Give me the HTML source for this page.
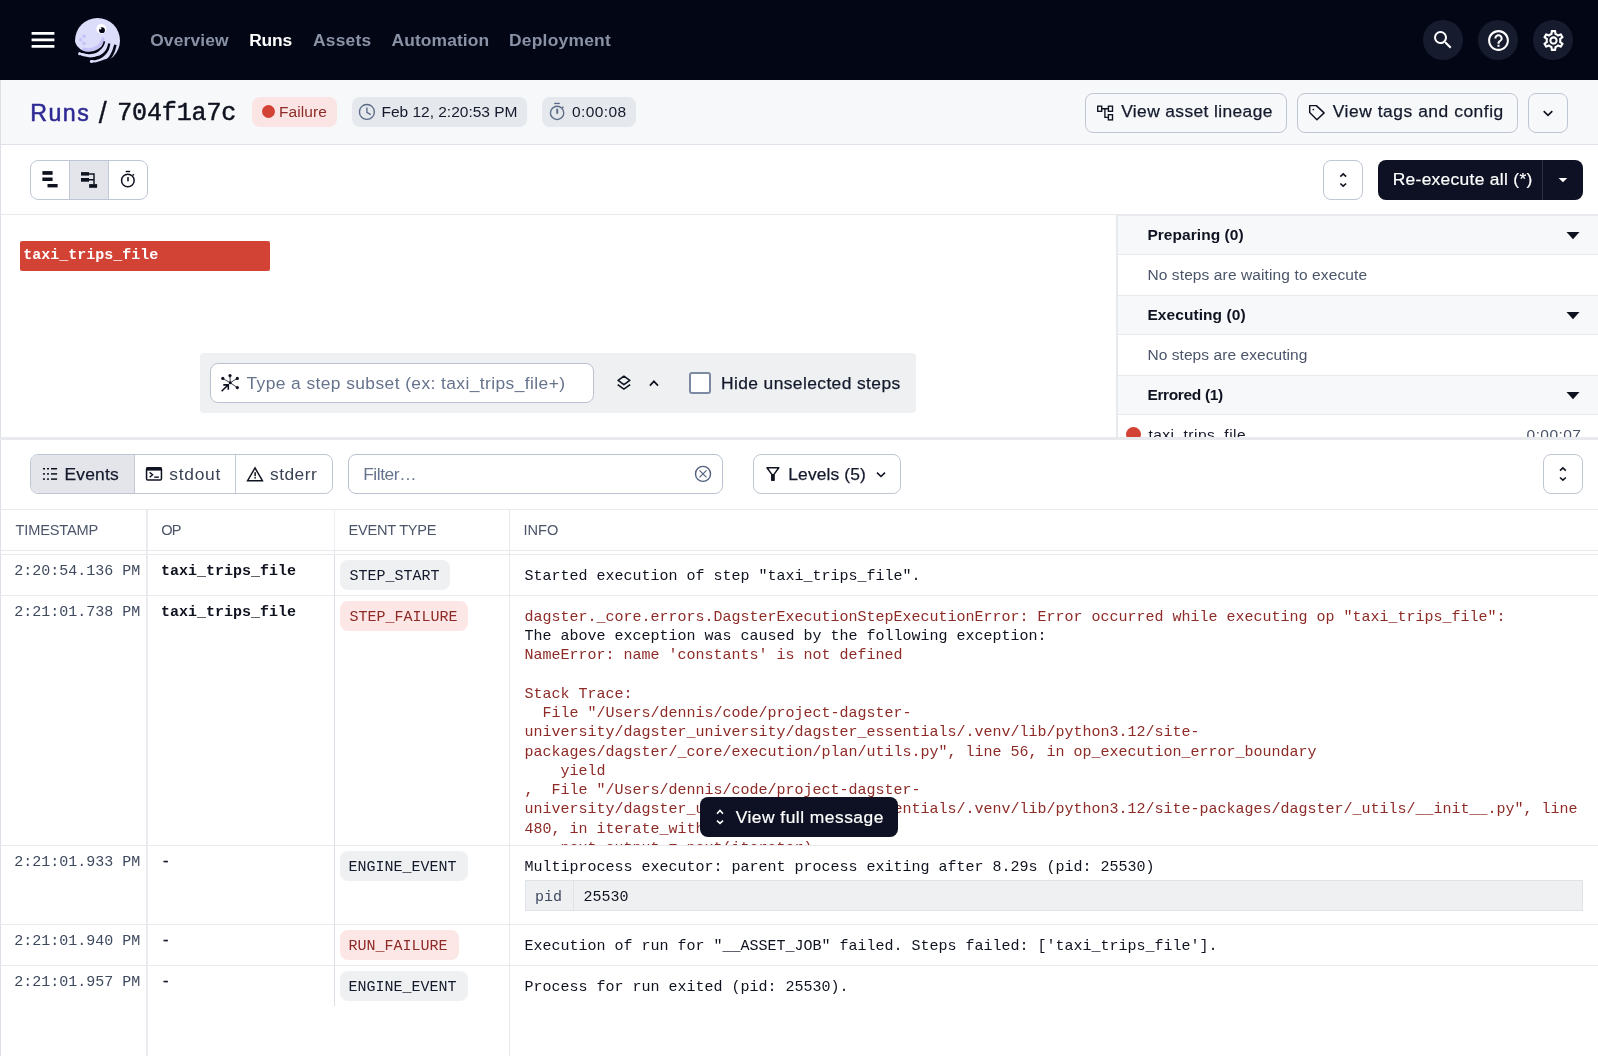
<!DOCTYPE html>
<html lang="en">
<head>
<meta charset="utf-8">
<title>Run 704f1a7c</title>
<style>
html,body{margin:0;padding:0;}
body{position:relative;width:1598px;height:1056px;overflow:hidden;background:#fff;font-family:"Liberation Sans",sans-serif;color:#0f1320;}
div,svg,.t{position:absolute;box-sizing:border-box;}
.t{white-space:pre;font-family:"Liberation Sans",sans-serif;}
.m{font-family:"Liberation Mono",monospace;}
.btn{border:1px solid #bec6d3;border-radius:8px;}
.ln{background:#e4e7ec;}
pre{margin:0;}
#app{left:0;top:0;width:1598px;height:1056px;overflow:hidden;will-change:transform;}

</style>
</head>
<body>
<div id="app">
<nav>
<div style="left:0px;top:0px;width:1598px;height:80px;background:#030615;"></div>
<svg style="left:31px;top:31px" width="24" height="18" viewBox="0 0 24 18" ><path d="M0.6 2.4h22.8M0.6 8.95h22.8M0.6 15.4h22.8" stroke="#fff" stroke-width="2.7" fill="none"/></svg>
<svg style="left:0;top:0" width="1598" height="1056" viewBox="0 0 1598 1056">
<circle cx="97.5" cy="40.5" r="22.5" fill="#dcdcfb"/>
<path d="M103.00 39.00C102.53 39.93 101.50 43.07 100.20 44.60C98.90 46.13 97.07 47.32 95.20 48.20C93.33 49.08 90.90 49.73 89.00 49.90C87.10 50.07 84.67 49.32 83.80 49.20" fill="none" stroke="#c6c2f6" stroke-width="3.2" stroke-linecap="round"/>
<path d="M103.70 41.10C103.37 41.90 102.97 44.40 101.70 45.90C100.43 47.40 98.18 49.13 96.10 50.10C94.02 51.07 91.45 51.65 89.20 51.70C86.95 51.75 84.50 51.22 82.60 50.40C80.70 49.58 79.03 48.12 77.80 46.80C76.57 45.48 75.63 43.22 75.20 42.50L70.00 45.00C70.75 46.53 73.75 52.67 74.50 54.20L78.90 52.40C79.48 52.52 80.68 52.80 82.40 53.10C84.12 53.40 86.78 54.30 89.20 54.20C91.62 54.10 94.63 53.65 96.90 52.50C99.17 51.35 101.40 49.10 102.80 47.30C104.20 45.50 104.88 42.63 105.30 41.70Z" fill="#030615"/>
<path d="M108.30 43.20C107.90 44.30 107.17 47.87 105.90 49.80C104.63 51.73 103.02 53.55 100.70 54.80C98.38 56.05 94.62 57.00 92.00 57.30C89.38 57.60 87.03 56.93 85.00 56.60C82.97 56.27 80.67 55.52 79.80 55.30L74.50 54.20C75.42 56.00 77.50 63.03 80.00 65.00C82.50 66.97 87.92 65.83 89.50 66.00L90.60 60.10C91.52 60.08 94.12 60.47 96.10 60.00C98.08 59.53 100.48 58.78 102.50 57.30C104.52 55.82 106.88 53.35 108.20 51.10C109.52 48.85 110.03 45.02 110.40 43.80Z" fill="#030615"/>
<path d="M114.20 44.60C113.92 45.50 113.22 48.23 112.50 50.00C111.78 51.77 110.80 53.78 109.90 55.20C109.00 56.62 108.25 57.72 107.10 58.50C105.95 59.28 104.68 59.33 103.00 59.90C101.32 60.47 98.90 61.37 97.00 61.90C95.10 62.43 92.50 62.90 91.60 63.10L89.50 66.00C92.58 66.17 104.92 66.83 108.00 67.00L108.80 61.60C109.00 61.30 109.35 60.73 110.00 59.80C110.65 58.87 111.83 57.55 112.70 56.00C113.57 54.45 114.55 52.32 115.20 50.50C115.85 48.68 116.37 46.00 116.60 45.10Z" fill="#030615"/>
<circle cx="79.7" cy="53.75" r="1.6" fill="#dcdcfb"/><circle cx="91.5" cy="61.5" r="1.6" fill="#dcdcfb"/>
<circle cx="84" cy="36.3" r="1.7" fill="#c6c2f6"/><circle cx="80.6" cy="39.8" r="1.7" fill="#c6c2f6"/><circle cx="83.9" cy="43.3" r="1.7" fill="#c6c2f6"/>
<ellipse cx="101.3" cy="28.9" rx="5" ry="4.8" fill="#fff"/>
<circle cx="102" cy="30.2" r="2.9" fill="#030615"/>
<circle cx="100.3" cy="28.5" r="1.1" fill="#fff"/>
</svg>
<span class="t" style="left:150.20px;top:30.00px;font-size:17.4px;line-height:21px;color:#8a92a6;letter-spacing:0.141px;font-weight:700;">Overview</span>
<span class="t" style="left:249.25px;top:30.00px;font-size:17.4px;line-height:21px;color:#ffffff;letter-spacing:-0.185px;font-weight:700;">Runs</span>
<span class="t" style="left:313.00px;top:30.00px;font-size:17.4px;line-height:21px;color:#8a92a6;letter-spacing:0.227px;font-weight:700;">Assets</span>
<span class="t" style="left:391.50px;top:30.00px;font-size:17.4px;line-height:21px;color:#8a92a6;letter-spacing:0.114px;font-weight:700;">Automation</span>
<span class="t" style="left:509.00px;top:30.00px;font-size:17.4px;line-height:21px;color:#8a92a6;letter-spacing:0.251px;font-weight:700;">Deployment</span>
<div style="left:1423px;top:20px;width:40px;height:40px;background:#171b2e;border-radius:50%;"></div>
<div style="left:1478px;top:20px;width:40px;height:40px;background:#171b2e;border-radius:50%;"></div>
<div style="left:1533px;top:20px;width:40px;height:40px;background:#171b2e;border-radius:50%;"></div>
<svg style="left:1431px;top:28px" width="24" height="24" viewBox="0 0 24 24"><path fill="#fff" d="M15.5 14h-.79l-.28-.27A6.471 6.471 0 0 0 16 9.5 6.5 6.5 0 1 0 9.5 16c1.61 0 3.09-.59 4.23-1.57l.27.28v.79l5 4.99L20.49 19l-4.99-5zm-6 0C7.01 14 5 11.99 5 9.5S7.01 5 9.5 5 14 7.01 14 9.5 11.99 14 9.5 14z"/></svg><svg style="left:1485.9px;top:27.8px" width="25" height="25" viewBox="0 0 24 24"><path fill="#fff" d="M11 18h2v-2h-2v2zm1-16C6.48 2 2 6.48 2 12s4.48 10 10 10 10-4.48 10-10S17.52 2 12 2zm0 18c-4.41 0-8-3.59-8-8s3.59-8 8-8 8 3.59 8 8-3.59 8-8 8zm0-14c-2.21 0-4 1.79-4 4h2c0-1.1.9-2 2-2s2 .9 2 2c0 2-3 1.75-3 5h2c0-2.25 3-2.5 3-5 0-2.21-1.79-4-4-4z"/></svg><svg style="left:1540.8px;top:27.9px" width="25" height="25" viewBox="0 0 24 24"><path fill="#fff" d="M19.43 12.98c.04-.32.07-.64.07-.98 0-.34-.03-.66-.07-.98l2.11-1.65c.19-.15.24-.42.12-.64l-2-3.46a.5.5 0 0 0-.61-.22l-2.49 1c-.52-.4-1.08-.73-1.69-.98l-.38-2.65A.488.488 0 0 0 14 2h-4c-.25 0-.46.18-.49.42l-.38 2.65c-.61.25-1.17.59-1.69.98l-2.49-1a.566.566 0 0 0-.18-.03c-.17 0-.34.09-.43.25l-2 3.46c-.13.22-.07.49.12.64l2.11 1.65c-.04.32-.07.65-.07.98 0 .33.03.66.07.98l-2.11 1.65c-.19.15-.24.42-.12.64l2 3.46a.5.5 0 0 0 .61.22l2.49-1c.52.4 1.08.73 1.69.98l.38 2.65c.03.24.24.42.49.42h4c.25 0 .46-.18.49-.42l.38-2.65c.61-.25 1.17-.59 1.69-.98l2.49 1c.06.02.12.03.18.03.17 0 .34-.09.43-.25l2-3.46c.12-.22.07-.49-.12-.64l-2.11-1.65zm-1.98-1.71c.04.31.05.52.05.73 0 .21-.02.43-.05.73l-.14 1.13.89.7 1.08.84-.7 1.21-1.27-.51-1.04-.42-.9.68c-.43.32-.84.56-1.25.73l-1.06.43-.16 1.13-.2 1.35h-1.4l-.19-1.35-.16-1.13-1.06-.43c-.43-.18-.83-.41-1.23-.71l-.91-.7-1.06.43-1.27.51-.7-1.21 1.08-.84.89-.7-.14-1.13c-.03-.31-.05-.54-.05-.74s.02-.43.05-.73l.14-1.13-.89-.7-1.08-.84.7-1.21 1.27.51 1.04.42.9-.68c.43-.32.84-.56 1.25-.73l1.06-.43.16-1.13.2-1.35h1.39l.19 1.35.16 1.13 1.06.43c.43.18.83.41 1.23.71l.91.7 1.06-.43 1.27-.51.7 1.21-1.07.85-.89.7.14 1.13zM12 8c-2.21 0-4 1.79-4 4s1.79 4 4 4 4-1.79 4-4-1.79-4-4-4zm0 6c-1.1 0-2-.9-2-2s.9-2 2-2 2 .9 2 2-.9 2-2 2z"/></svg>
</nav>
<header>
<div style="left:0px;top:80px;width:1598px;height:64px;background:#f7f8fa;"></div>
<div style="left:0px;top:144px;width:1598px;height:1px;background:#dfe2e8;"></div>
<a class="t" style="left:30.20px;top:98.90px;font-size:23.2px;line-height:28px;color:#2e2a94;letter-spacing:1.521px;-webkit-text-stroke:0.5px #2e2a94;">Runs</a>
<span class="t" style="left:98.80px;top:95.60px;font-size:28.8px;line-height:35px;color:#0f1320;-webkit-text-stroke:0.3px #0f1320;">/</span>
<span class="t m" style="left:117.20px;top:99.20px;font-size:25px;line-height:30px;color:#0f1320;letter-spacing:-0.131px;-webkit-text-stroke:0.5px #0f1320;">704f1a7c</span>
<div style="left:252px;top:97px;width:84.5px;height:30px;background:#fbe5e4;border-radius:8px;"></div>
<div style="left:261.5px;top:105.25px;width:13.0px;height:13.0px;background:#d24235;border-radius:50%;"></div>
<span class="t" style="left:279.00px;top:101.75px;font-size:15.5px;line-height:19px;color:#8e2b27;letter-spacing:0.082px;">Failure</span>
<div style="left:352px;top:97px;width:174.5px;height:30px;background:#e5e8ec;border-radius:8px;"></div>
<span class="t" style="left:381.50px;top:101.75px;font-size:15.5px;line-height:19px;color:#141a2c;letter-spacing:-0.013px;">Feb 12, 2:20:53 PM</span>
<div style="left:541.75px;top:97px;width:93.75px;height:30px;background:#e5e8ec;border-radius:8px;"></div>
<span class="t" style="left:572.00px;top:101.75px;font-size:15.5px;line-height:19px;color:#141a2c;letter-spacing:0.401px;">0:00:08</span>
<svg style="left:0;top:0" width="1598" height="1056" viewBox="0 0 1598 1056">
<g fill="none" stroke="#5b6b87" stroke-width="1.35">
<circle cx="366.9" cy="111.9" r="7.45"/><path d="M366.9 107.6V112.4L370.7 114.7"/>
<circle cx="557.1" cy="112.9" r="6.65"/><path d="M554.2 103.45H559.8" /><path d="M557.2 108.7V113.8" stroke-width="1.9"/><path d="M562 108.1L563.4 106.7"/>
</g>
<g fill="none" stroke="#0f1320" stroke-width="1.35">
<rect x="1097.7" y="106.2" width="4" height="5.1"/><rect x="1108.4" y="106.2" width="4.1" height="5.1"/><rect x="1108.4" y="114.7" width="4.1" height="5.2"/>
<path d="M1101.7 108.7H1108.4M1104.9 108.7V117.3H1108.4"/>
<path d="M1309.7 105.6H1316.3L1324.1 112.9L1316.9 119.7L1309.7 112.5z" stroke-width="1.45" stroke-linejoin="round"/>
<path d="M1543.7 111.1L1548 115.3L1552.3 111.1" stroke-width="1.6"/>
</g>
<circle cx="1313.35" cy="109.5" r="0.85" fill="#0f1320"/>
</svg>
<div class="btn" style="left:1085px;top:93px;width:202px;height:40px;"></div>
<span class="t" style="left:1121.20px;top:101.00px;font-size:17.4px;line-height:21px;color:#141a2c;letter-spacing:0.381px;-webkit-text-stroke:0.25px #141a2c;">View asset lineage</span>
<div class="btn" style="left:1297px;top:93px;width:221px;height:40px;"></div>
<span class="t" style="left:1332.80px;top:101.00px;font-size:17.4px;line-height:21px;color:#141a2c;letter-spacing:0.542px;-webkit-text-stroke:0.25px #141a2c;">View tags and config</span>
<div class="btn" style="left:1528px;top:93px;width:40px;height:40px;"></div>
</header>
<section>
<div style="left:0px;top:80px;width:1px;height:976px;background:#dde1e7;"></div>
<div class="btn" style="left:30px;top:160px;width:118px;height:40px;background:#fff;"></div>
<div style="left:69px;top:161px;width:39.5px;height:38px;background:#e3e5ea;border-left:1px solid #c3cad7;border-right:1px solid #c3cad7;"></div>
<div class="btn" style="left:1323px;top:160px;width:40px;height:40px;background:#fff;"></div>
<div style="left:1378px;top:160px;width:205px;height:40px;background:#0e1124;border-radius:8px;"></div>
<div style="left:1542px;top:160px;width:1px;height:40px;background:#2a2f45;"></div>
<span class="t" style="left:1392.70px;top:168.50px;font-size:17.4px;line-height:21px;color:#ffffff;letter-spacing:0.309px;-webkit-text-stroke:0.2px #ffffff;">Re-execute all (*)</span>
<svg style="left:0;top:0" width="1598" height="1056" viewBox="0 0 1598 1056">
<g fill="#0f1320">
<rect x="42.4" y="171.1" width="10.2" height="3.7"/><rect x="42.4" y="177.5" width="10.2" height="3.5"/><rect x="47.5" y="184" width="10.1" height="3.4"/>
<rect x="81" y="172.1" width="8" height="3.5"/><rect x="81" y="178" width="8" height="3.7"/><rect x="89.1" y="184.1" width="8" height="3.7"/>
<rect x="125.7" y="170.8" width="4.4" height="1.4"/><rect x="127.2" y="177.1" width="1.6" height="4.2"/>
</g>
<g fill="none" stroke="#0f1320">
<path d="M89 173.9H94V184.2M89 179.8H94" stroke-width="1.45"/>
<circle cx="127.85" cy="180.5" r="6.3" stroke-width="1.5"/><path d="M132.6 175.5L133.9 174.2" stroke-width="1.4"/>
</g>
<path d="M1340.3 176.6L1343.2 173.8L1346.1000000000001 176.6M1340.3 183.5L1343.2 186.20000000000002L1346.1000000000001 183.5" fill="none" stroke="#0f1320" stroke-width="1.6"/>
<path d="M1558.6 177.9H1567.3L1562.95 182.3z" fill="#fff"/>
</svg>
<div style="left:0px;top:214px;width:1598px;height:1px;background:#e7e9ed;"></div>
</section>
<section>
<div style="left:20px;top:241px;width:250px;height:29.5px;background:#d24235;border-radius:2px;"></div>
<span class="t m" style="left:23.25px;top:247.00px;font-size:15px;line-height:18px;color:#ffffff;font-weight:700;">taxi_trips_file</span>
<div style="left:200px;top:353px;width:715.5px;height:60px;background:#eef0f2;border-radius:4px;"></div>
<div style="left:210px;top:363px;width:384px;height:40px;background:#fff;border:1px solid #b9c1d0;border-radius:8px;"></div>
<span class="t" style="left:246.50px;top:372.90px;font-size:17.4px;line-height:21px;color:#66738c;letter-spacing:0.412px;">Type a step subset (ex: taxi_trips_file+)</span>
<div style="left:688.5px;top:372px;width:22.5px;height:22px;background:#fff;border:2px solid #7d89a1;border-radius:3px;"></div>
<span class="t" style="left:721.00px;top:372.50px;font-size:17.4px;line-height:21px;color:#141a2c;letter-spacing:0.404px;-webkit-text-stroke:0.25px #141a2c;">Hide unselected steps</span>
<svg style="left:0;top:0" width="1598" height="1056" viewBox="0 0 1598 1056">
<g fill="#0f1320"><circle cx="230.2" cy="382.75" r="1.5"/><circle cx="230" cy="375.6" r="1.6"/><circle cx="222.8" cy="378.4" r="1.6"/><circle cx="237.3" cy="378.4" r="1.6"/><circle cx="237.3" cy="387.6" r="1.6"/></g>
<g fill="none" stroke="#0f1320">
<path d="M230.2 382.75L230 375.6M230.2 382.75L222.8 378.4M230.2 382.75L237.3 378.4M230.2 382.75L237.3 387.6" stroke-width="0.8"/>
<path d="M221.6 391.2L228 385M223.3 384.9H228.3V389.8" stroke-width="1.6"/>
<path d="M623.9 376.2L629.8 380.4L623.9 384.6L618.1 380.4z" stroke-width="1.6" stroke-linejoin="round"/>
<path d="M617.7 384.7L623.9 389.1L630.2 384.7" stroke-width="1.6"/>
<path d="M649.9 385.6L653.9 381.3L658 385.6" stroke-width="1.7"/>
</g>
</svg>
</section>
<aside>
<div style="left:1116px;top:215px;width:2px;height:222px;background:#e6e9ed;"></div>
<div style="left:1118px;top:215px;width:480px;height:39px;background:#f7f8fa;"></div>
<div style="left:1118px;top:254px;width:480px;height:1px;background:#e7e9ed;"></div>
<span class="t" style="left:1147.40px;top:224.80px;font-size:15.5px;line-height:19px;color:#0f1320;letter-spacing:0.047px;font-weight:700;">Preparing (0)</span>
<svg style="left:1566px;top:232px" width="14" height="8" viewBox="0 0 14 8"><path d="M0.5 0h13L7 7.2z" fill="#0f1320"/></svg>
<span class="t" style="left:1147.40px;top:264.50px;font-size:15.5px;line-height:19px;color:#4b5569;letter-spacing:0.112px;">No steps are waiting to execute</span>
<div style="left:1118px;top:295px;width:480px;height:1px;background:#e7e9ed;"></div>
<div style="left:1118px;top:296px;width:480px;height:38px;background:#f7f8fa;"></div>
<div style="left:1118px;top:334px;width:480px;height:1px;background:#e7e9ed;"></div>
<span class="t" style="left:1147.40px;top:304.80px;font-size:15.5px;line-height:19px;color:#0f1320;letter-spacing:0.078px;font-weight:700;">Executing (0)</span>
<svg style="left:1566px;top:312px" width="14" height="8" viewBox="0 0 14 8"><path d="M0.5 0h13L7 7.2z" fill="#0f1320"/></svg>
<span class="t" style="left:1147.40px;top:344.50px;font-size:15.5px;line-height:19px;color:#4b5569;letter-spacing:0.071px;">No steps are executing</span>
<div style="left:1118px;top:375px;width:480px;height:1px;background:#e7e9ed;"></div>
<div style="left:1118px;top:376px;width:480px;height:38px;background:#f7f8fa;"></div>
<div style="left:1118px;top:414px;width:480px;height:1px;background:#e7e9ed;"></div>
<span class="t" style="left:1147.40px;top:384.80px;font-size:15.5px;line-height:19px;color:#0f1320;letter-spacing:-0.348px;font-weight:700;">Errored (1)</span>
<svg style="left:1566px;top:392px" width="14" height="8" viewBox="0 0 14 8"><path d="M0.5 0h13L7 7.2z" fill="#0f1320"/></svg>
<div style="left:1116px;top:214px;width:482px;height:2px;background:#e7e9ed;"></div>
<div style="left:1126px;top:426.9px;width:15.099999999999909px;height:15.100000000000023px;background:#d24235;border-radius:50%;"></div>
<span class="t" style="left:1148.40px;top:424.60px;font-size:15.5px;line-height:19px;color:#141a2c;letter-spacing:0.483px;">taxi_trips_file</span>
<span class="t" style="left:1526.60px;top:424.60px;font-size:15.5px;line-height:19px;color:#4b5569;letter-spacing:0.418px;">0:00:07</span>
</aside>
<div style="left:0px;top:437px;width:1598px;height:3px;background:#e8eaed;"></div>
<div style="left:1px;top:440px;width:1597px;height:14px;background:#fff;"></div>
<section>
<div class="btn" style="left:30px;top:454px;width:302.5px;height:40px;background:#fff;"></div>
<div style="left:31px;top:455px;width:103px;height:38px;background:#e3e5ea;border-radius:7px 0 0 7px;"></div>
<div style="left:134px;top:455px;width:1px;height:38px;background:#c3cad7;"></div>
<div style="left:235px;top:455px;width:1px;height:38px;background:#c3cad7;"></div>
<span class="t" style="left:64.50px;top:463.50px;font-size:17.4px;line-height:21px;color:#141a2c;letter-spacing:0.206px;-webkit-text-stroke:0.25px #141a2c;">Events</span>
<span class="t" style="left:169.25px;top:463.50px;font-size:17.4px;line-height:21px;color:#3a4254;letter-spacing:0.741px;">stdout</span>
<span class="t" style="left:270.00px;top:463.50px;font-size:17.4px;line-height:21px;color:#3a4254;letter-spacing:0.468px;">stderr</span>
<div style="left:348px;top:454px;width:375px;height:40px;background:#fff;border:1px solid #b9c1d0;border-radius:8px;"></div>
<span class="t" style="left:363.20px;top:463.50px;font-size:17.4px;line-height:21px;color:#66738c;letter-spacing:-0.441px;">Filter…</span>
<div class="btn" style="left:753px;top:454px;width:148px;height:40px;background:#fff;"></div>
<span class="t" style="left:788.30px;top:463.50px;font-size:17.4px;line-height:21px;color:#141a2c;letter-spacing:0.137px;-webkit-text-stroke:0.25px #141a2c;">Levels (5)</span>
<div class="btn" style="left:1543px;top:454px;width:40px;height:40px;background:#fff;"></div>
<svg style="left:0;top:0" width="1598" height="1056" viewBox="0 0 1598 1056">
<g fill="#0f1320">
<rect x="42.95" y="468" width="2.05" height="1.5"/><rect x="47" y="468" width="2" height="1.5"/><rect x="51" y="468" width="6.1" height="1.5"/><rect x="42.95" y="473.15" width="2.05" height="1.5"/><rect x="47" y="473.15" width="2" height="1.5"/><rect x="51" y="473.15" width="6.1" height="1.5"/><rect x="42.95" y="478.35" width="2.05" height="1.5"/><rect x="47" y="478.35" width="2" height="1.5"/><rect x="51" y="478.35" width="6.1" height="1.5"/>
<rect x="146.4" y="467.6" width="15.2" height="3"/>
<rect x="154.2" y="476.5" width="4.7" height="1.35"/>
<rect x="254.4" y="472.2" width="1.5" height="4"/><rect x="254.4" y="477.1" width="1.5" height="1.5"/>
</g>
<g fill="none" stroke="#0f1320">
<rect x="146.55" y="467.85" width="14.9" height="12.1" rx="1.3" stroke-width="1.5"/>
<path d="M149.6 472.4L152.6 474.8L149.6 477.3" stroke-width="1.4"/>
<path d="M255 467.9L262.4 480.7H247.6z" stroke-width="1.5" stroke-linejoin="miter"/>
<path d="M767 467.8H778.8L774 474.4V480.2H771.8V474.4z" stroke-width="1.5" stroke-linejoin="round"/>
<path d="M877 472.7L881 476.5L885 472.7" stroke-width="1.6"/>
</g>
<rect x="771.6" y="474" width="2.6" height="6.5" fill="#0f1320"/>
<g fill="none" stroke="#52617f"><circle cx="703" cy="473.9" r="7.5" stroke-width="1.4"/><path d="M699.5 470.4L706.5 477.4M706.5 470.4L699.5 477.4" stroke-width="1.2"/></g>
<path d="M1560.0 470.59999999999997L1562.9 467.79999999999995L1565.8000000000002 470.59999999999997M1560.0 477.5L1562.9 480.2L1565.8000000000002 477.5" fill="none" stroke="#0f1320" stroke-width="1.6"/>
</svg>
</section>
<main>
<div style="left:0px;top:509px;width:1598px;height:1px;background:#e7e9ed;"></div>
<div style="left:0px;top:550px;width:1598px;height:1px;background:#e7e9ed;"></div>
<div style="left:0px;top:554px;width:1598px;height:1px;background:#e7e9ed;"></div>
<div style="left:146px;top:510px;width:2px;height:546px;background:#e9ebee;"></div>
<div style="left:509px;top:510px;width:1px;height:546px;background:#e8eaee;"></div>
<div style="left:334px;top:510px;width:1px;height:40px;background:#eceef1;"></div>
<div style="left:334px;top:551px;width:1px;height:2px;background:#dcdfe5;"></div>
<div style="left:334px;top:555px;width:1px;height:451px;background:#dcdfe5;"></div>
<span class="t" style="left:15.50px;top:521.00px;font-size:14.6px;line-height:18px;color:#4b5569;letter-spacing:-0.164px;">TIMESTAMP</span>
<span class="t" style="left:161.25px;top:521.00px;font-size:14.6px;line-height:18px;color:#4b5569;letter-spacing:-0.851px;">OP</span>
<span class="t" style="left:348.50px;top:521.00px;font-size:14.6px;line-height:18px;color:#4b5569;letter-spacing:-0.255px;">EVENT TYPE</span>
<span class="t" style="left:523.60px;top:521.00px;font-size:14.6px;line-height:18px;color:#4b5569;letter-spacing:-0.036px;">INFO</span>
<span class="t m" style="left:14.25px;top:563.00px;font-size:15px;line-height:18px;color:#3f4a5f;">2:20:54.136 PM</span>
<span class="t m" style="left:161.00px;top:563.00px;font-size:15px;line-height:18px;color:#0f1320;font-weight:700;">taxi_trips_file</span>
<div style="left:340px;top:560px;width:110px;height:30px;background:#eef0f2;border-radius:8px;"></div>
<span class="t m" style="left:349.60px;top:567.50px;font-size:15px;line-height:18px;color:#141a2c;">STEP_START</span>
<div style="left:0px;top:595px;width:1598px;height:1px;background:#e7e9ed;"></div>
<span class="t m" style="left:14.25px;top:604.00px;font-size:15px;line-height:18px;color:#3f4a5f;">2:21:01.738 PM</span>
<span class="t m" style="left:161.00px;top:604.00px;font-size:15px;line-height:18px;color:#0f1320;font-weight:700;">taxi_trips_file</span>
<div style="left:340px;top:601px;width:128px;height:30px;background:#fce7e6;border-radius:8px;"></div>
<span class="t m" style="left:349.60px;top:608.50px;font-size:15px;line-height:18px;color:#8e2b27;">STEP_FAILURE</span>
<div style="left:0px;top:845px;width:1598px;height:1px;background:#e7e9ed;"></div>
<span class="t m" style="left:14.25px;top:854.00px;font-size:15px;line-height:18px;color:#3f4a5f;">2:21:01.933 PM</span>
<span class="t m" style="left:161.30px;top:854.00px;font-size:15px;line-height:18px;color:#141a2c;-webkit-text-stroke:0.3px #141a2c;">-</span>
<div style="left:340px;top:851px;width:128px;height:30px;background:#eef0f2;border-radius:8px;"></div>
<span class="t m" style="left:348.60px;top:858.50px;font-size:15px;line-height:18px;color:#141a2c;">ENGINE_EVENT</span>
<div style="left:0px;top:924px;width:1598px;height:1px;background:#e7e9ed;"></div>
<span class="t m" style="left:14.25px;top:933.00px;font-size:15px;line-height:18px;color:#3f4a5f;">2:21:01.940 PM</span>
<span class="t m" style="left:161.30px;top:933.00px;font-size:15px;line-height:18px;color:#141a2c;-webkit-text-stroke:0.3px #141a2c;">-</span>
<div style="left:340px;top:930px;width:119px;height:30px;background:#fce7e6;border-radius:8px;"></div>
<span class="t m" style="left:348.60px;top:937.50px;font-size:15px;line-height:18px;color:#8e2b27;">RUN_FAILURE</span>
<div style="left:0px;top:965px;width:1598px;height:1px;background:#e7e9ed;"></div>
<span class="t m" style="left:14.25px;top:974.00px;font-size:15px;line-height:18px;color:#3f4a5f;">2:21:01.957 PM</span>
<span class="t m" style="left:161.30px;top:974.00px;font-size:15px;line-height:18px;color:#141a2c;-webkit-text-stroke:0.3px #141a2c;">-</span>
<div style="left:340px;top:971px;width:128px;height:30px;background:#eef0f2;border-radius:8px;"></div>
<span class="t m" style="left:348.60px;top:978.50px;font-size:15px;line-height:18px;color:#141a2c;">ENGINE_EVENT</span>
<span class="t m" style="left:524.40px;top:567.50px;font-size:15px;line-height:18px;color:#0f1320;">Started execution of step "taxi_trips_file".</span>
<div style="left:510px;top:596px;width:1088px;height:249px;overflow:hidden;">
<span class="t m" style="left:14.40px;top:12.50px;font-size:15px;line-height:18px;color:#8e2b27;">dagster._core.errors.DagsterExecutionStepExecutionError: Error occurred while executing op "taxi_trips_file":</span>
<span class="t m" style="left:14.40px;top:31.79px;font-size:15px;line-height:18px;color:#0f1320;">The above exception was caused by the following exception:</span>
<span class="t m" style="left:14.40px;top:51.07px;font-size:15px;line-height:18px;color:#8e2b27;">NameError: name 'constants' is not defined</span>
<span class="t m" style="left:14.40px;top:89.64px;font-size:15px;line-height:18px;color:#8e2b27;">Stack Trace:</span>
<span class="t m" style="left:14.40px;top:108.93px;font-size:15px;line-height:18px;color:#8e2b27;">  File "/Users/dennis/code/project-dagster-</span>
<span class="t m" style="left:14.40px;top:128.22px;font-size:15px;line-height:18px;color:#8e2b27;">university/dagster_university/dagster_essentials/.venv/lib/python3.12/site-</span>
<span class="t m" style="left:14.40px;top:147.50px;font-size:15px;line-height:18px;color:#8e2b27;">packages/dagster/_core/execution/plan/utils.py", line 56, in op_execution_error_boundary</span>
<span class="t m" style="left:14.40px;top:166.79px;font-size:15px;line-height:18px;color:#8e2b27;">    yield</span>
<span class="t m" style="left:14.40px;top:186.07px;font-size:15px;line-height:18px;color:#8e2b27;">,  File "/Users/dennis/code/project-dagster-</span>
<span class="t m" style="left:14.40px;top:205.36px;font-size:15px;line-height:18px;color:#8e2b27;">university/dagster_university/dagster_essentials/.venv/lib/python3.12/site-packages/dagster/_utils/__init__.py", line</span>
<span class="t m" style="left:14.40px;top:224.65px;font-size:15px;line-height:18px;color:#8e2b27;">480, in iterate_with_context</span>
<span class="t m" style="left:14.40px;top:243.93px;font-size:15px;line-height:18px;color:#8e2b27;">    next_output = next(iterator)</span>
</div>
<div style="left:700px;top:797px;width:198px;height:40px;background:#0e1124;border-radius:8px;"></div>
<svg style="left:0;top:0" width="1598" height="1056" viewBox="0 0 1598 1056"><path d="M717 813.7L720 810.5L723 813.7M717 820.7L720 823.4L723 820.7" fill="none" stroke="#fff" stroke-width="1.6"/></svg>
<span class="t" style="left:735.70px;top:806.60px;font-size:17.4px;line-height:21px;color:#ffffff;letter-spacing:0.490px;-webkit-text-stroke:0.2px #ffffff;">View full message</span>
<span class="t m" style="left:524.40px;top:858.50px;font-size:15px;line-height:18px;color:#0f1320;">Multiprocess executor: parent process exiting after 8.29s (pid: 25530)</span>
<div style="left:525px;top:880px;width:1058px;height:31px;background:#eff0f2;border:1px solid #dfe2e7;"></div>
<div style="left:573px;top:881px;width:1px;height:29px;background:#dfe2e7;"></div>
<span class="t m" style="left:535.00px;top:888.50px;font-size:15px;line-height:18px;color:#3f4a5f;">pid</span>
<span class="t m" style="left:583.50px;top:888.50px;font-size:15px;line-height:18px;color:#0f1320;">25530</span>
<span class="t m" style="left:524.40px;top:937.50px;font-size:15px;line-height:18px;color:#0f1320;">Execution of run for "__ASSET_JOB" failed. Steps failed: ['taxi_trips_file'].</span>
<span class="t m" style="left:524.40px;top:978.50px;font-size:15px;line-height:18px;color:#0f1320;">Process for run exited (pid: 25530).</span>
</main>
</div>
</body>
</html>
